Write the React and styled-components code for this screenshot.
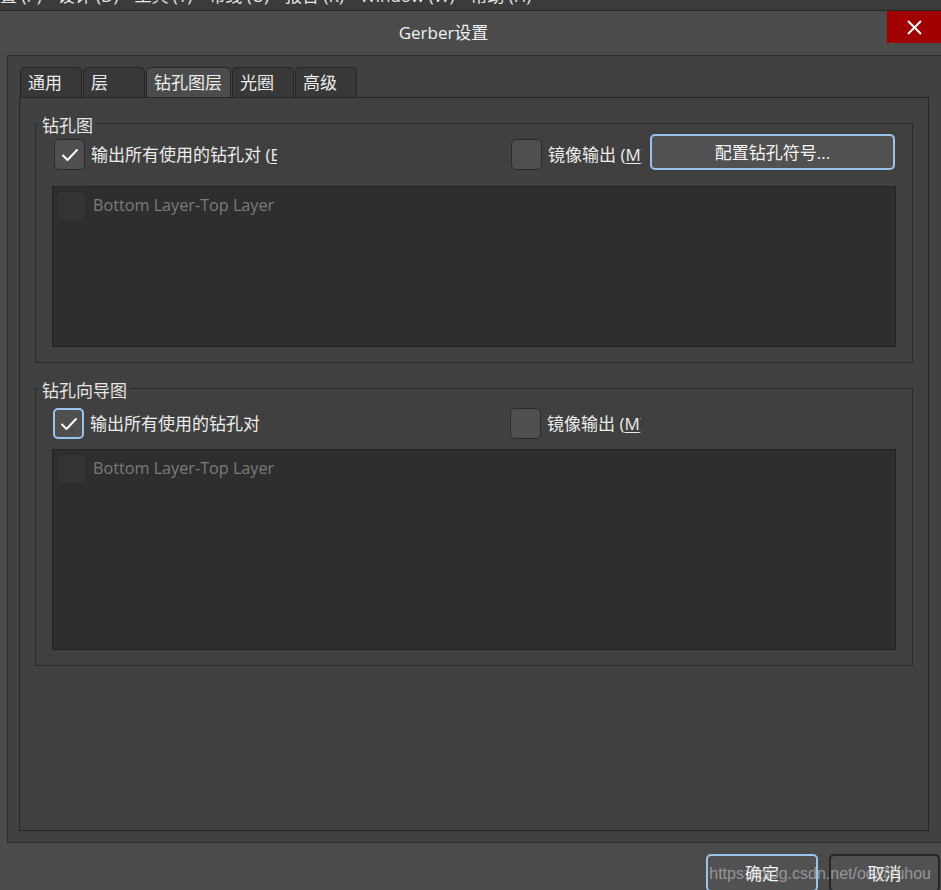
import React from 'react' ;
import styled, { createGlobalStyle } from 'styled-components' ;

const GlobalStyle = createGlobalStyle`
    html, body {
        margin : 0 ;
        padding : 0 ;
        background : #4b4b4b ;
    }
    * {
        box-sizing : border-box ;
    }
`;

const Page = styled.div`
    width : 941px ;
    height : 890px ;
    overflow : hidden ;
    position : relative ;

    display : flex ;
    flex-direction : column ;

    background : #4b4b4b ;
    color : #e8e8e8 ;
    font-family : "Open Sans", "Noto Sans CJK SC", sans-serif ;
    font-size : 17px ;
`;

const MenuStrip = styled.div`
    height : 11px ;
    flex-shrink : 0 ;
    overflow : hidden ;

    display : flex ;
    gap : 16px ;

    background : #3b3b3b ;
    border-bottom : 1px solid #262626 ;
`;

const MenuItem = styled.span`
    margin-top : -14px ;
    line-height : 20px ;
    white-space : nowrap ;
    color : #e6e6e6 ;

    &:first-child {
        margin-left : -17px ;
    }
`;

const TitleBar = styled.div`
    height : 44px ;
    flex-shrink : 0 ;
    display : flex ;
`;

const Title = styled.div`
    flex : 1 ;
    padding-bottom : 4px ;

    display : flex ;
    align-items : center ;
    justify-content : center ;

    color : #f2f2f2 ;
    font-size : 17px ;
`;

const CloseButton = styled.div`
    width : 54px ;
    height : 32px ;

    display : flex ;
    align-items : center ;
    justify-content : center ;

    background : #a00000 ;
`;

const OuterPanel = styled.div`
    height : 788px ;
    flex-shrink : 0 ;
    margin : 0 -5px 0 7px ;
    padding : 11px 17px 0 11px ;

    display : flex ;
    flex-direction : column ;

    background : #414141 ;
    border : 1px solid #2e2e2e ;
    border-right : none ;
`;

const TabRow = styled.div`
    height : 30px ;
    display : flex ;
    gap : 1px ;
    padding-left : 1px ;
`;

const Tab = styled.div`
    width : ${props => props.$w}px ;
    height : 30px ;
    padding : 0 0 3px 7px ;

    display : flex ;
    align-items : center ;

    background : ${props => props.$active ? '#4c4c4c' : '#383838'} ;
    border : 1px solid #262626 ;
    border-bottom : none ;
    border-radius : 5px 5px 0 0 ;

    color : #ececec ;
    white-space : nowrap ;
`;

const TabPanel = styled.div`
    height : 734px ;
    padding : 14px 15px 0 15px ;

    display : flex ;
    flex-direction : column ;
    gap : 14px ;

    background : #404040 ;
    border : 1px solid #262626 ;
`;

const Group = styled.fieldset`
    margin : 0 ;
    padding : 0 16px 15px 16px ;
    min-width : 0 ;

    border : 1px solid #2a2a2a ;
`;

const Legend = styled.legend`
    margin-left : -13px ;
    padding : 5px 3px 0 3px ;
    line-height : 17px ;
    color : #e6e6e6 ;
`;

const Row = styled.div`
    padding-top : ${props => props.$pad}px ;
    display : flex ;
    align-items : flex-start ;
`;

const CheckItem = styled.div`
    width : ${props => props.$w ? `${props.$w}px` : 'auto'} ;
    flex-shrink : 0 ;
    margin-left : ${props => props.$ml || 0}px ;

    display : flex ;
    align-items : center ;
    gap : 6px ;
`;

const Box = styled.div`
    width : 31px ;
    height : 31px ;
    flex-shrink : 0 ;

    display : flex ;
    align-items : center ;
    justify-content : center ;

    background : #4f4f4f ;
    border : ${props => props.$focus ? '2px solid #9cc4ea' : '1.5px solid #2a2a2a'} ;
    border-radius : 5px ;
`;

const Label = styled.span`
    max-width : ${props => props.$clip ? `${props.$clip}px` : 'none'} ;
    overflow : hidden ;
    white-space : nowrap ;
    line-height : 24px ;
    color : #ececec ;

    u {
        text-underline-offset : 2px ;
    }
`;

const Button = styled.div`
    width : ${props => props.$w}px ;
    height : ${props => props.$h}px ;
    margin-top : ${props => props.$mt || 0}px ;
    margin-left : ${props => props.$ml || 0}px ;
    padding-bottom : 2px ;
    flex-shrink : 0 ;

    display : flex ;
    align-items : center ;
    justify-content : center ;

    background : #515151 ;
    border : ${props => props.$focus ? '2px solid #9cc4ea' : '2px solid #262626'} ;
    border-radius : 5px ;

    color : #f4f4f4 ;
`;

const ListBox = styled.div`
    height : ${props => props.$h}px ;
    margin-top : ${props => props.$mt}px ;
    padding : 4px 3px ;

    background : #2e2e2e ;
    border : 1px solid #222 ;
`;

const ListItem = styled.div`
    display : flex ;
    align-items : center ;
    gap : 7px ;
`;

const DisabledBox = styled.div`
    width : 30px ;
    height : 30px ;

    background : #333 ;
    border : 1px solid #2b2b2b ;
    border-radius : 5px ;
`;

const DisabledText = styled.span`
    padding-bottom : 3px ;
    color : #7b7b7b ;
    font-size : 16.2px ;
`;

const Footer = styled.div`
    padding : 11px 1px 0 0 ;
    display : flex ;
    justify-content : flex-end ;
    gap : 11px ;
`;

const Watermark = styled.div`
    position : absolute ;
    right : 10px ;
    bottom : 7px ;

    color : rgba(210, 210, 210, 0.55) ;
    font-family : "Liberation Sans", Arial, sans-serif ;
    font-size : 16px ;
    pointer-events : none ;
`;

const Check = () => (
    <svg width="18" height="14" viewBox="0 0 18 14">
        <path d="M2 7.5 L6.5 12 L16 2" fill="none" stroke="#fff" strokeWidth="2" strokeLinecap="round" strokeLinejoin="round"/>
    </svg>
) ;

const menus = [ '放置 (P)', '设计 (D)', '工具 (T)', '布线 (U)', '报告 (R)', 'Window (W)', '帮助 (H)' ] ;

const tabs = [
    { name : '通用', w : 62 },
    { name : '层', w : 62 },
    { name : '钻孔图层', w : 85, active : true },
    { name : '光圈', w : 62 },
    { name : '高级', w : 62 },
] ;

const LayerList = ({ h, mt }) => (
    <ListBox $h={h} $mt={mt}>
        <ListItem>
            <DisabledBox/>
            <DisabledText>Bottom Layer-Top Layer</DisabledText>
        </ListItem>
    </ListBox>
) ;

const App = () => {
    return (
        <Page>
            <GlobalStyle/>
            <MenuStrip>
                {menus.map(m => <MenuItem key={m}>{m}</MenuItem>)}
            </MenuStrip>

            <TitleBar>
                <Title>Gerber设置</Title>
                <CloseButton>
                    <svg width="15" height="15" viewBox="0 0 15 15">
                        <path d="M1 1 L14 14 M14 1 L1 14" stroke="#fff" strokeWidth="2"/>
                    </svg>
                </CloseButton>
            </TitleBar>

            <OuterPanel>
                <TabRow>
                    {tabs.map(t => (
                        <Tab key={t.name} $w={t.w} $active={t.active}>{t.name}</Tab>
                    ))}
                </TabRow>
                <TabPanel>
                    <Group>
                        <Legend>钻孔图</Legend>
                        <Row $pad={5}>
                            <CheckItem $w={457} $ml={2}>
                                <Box><Check/></Box>
                                <Label $clip={186}>输出所有使用的钻孔对 (<u>E</u>)</Label>
                            </CheckItem>
                            <CheckItem>
                                <Box/>
                                <Label $clip={94}>镜像输出 (<u>M</u>)</Label>
                            </CheckItem>
                            <Button $w={245} $h={36} $mt={-5} $ml={8} $focus>配置钻孔符号...</Button>
                        </Row>
                        <LayerList h={161} mt={16}/>
                    </Group>

                    <Group>
                        <Legend>钻孔向导图</Legend>
                        <Row $pad={9}>
                            <CheckItem $w={457} $ml={1}>
                                <Box $focus><Check/></Box>
                                <Label>输出所有使用的钻孔对</Label>
                            </CheckItem>
                            <CheckItem>
                                <Box/>
                                <Label $clip={94}>镜像输出 (<u>M</u>)</Label>
                            </CheckItem>
                        </Row>
                        <LayerList h={201} mt={10}/>
                    </Group>
                </TabPanel>
            </OuterPanel>

            <Footer>
                <Button $w={112} $h={38} $focus>确定</Button>
                <Button $w={111} $h={38}>取消</Button>
            </Footer>

            <Watermark>https://blog.csdn.net/oo@fuhou</Watermark>
        </Page>
    );
};

export default App ;
